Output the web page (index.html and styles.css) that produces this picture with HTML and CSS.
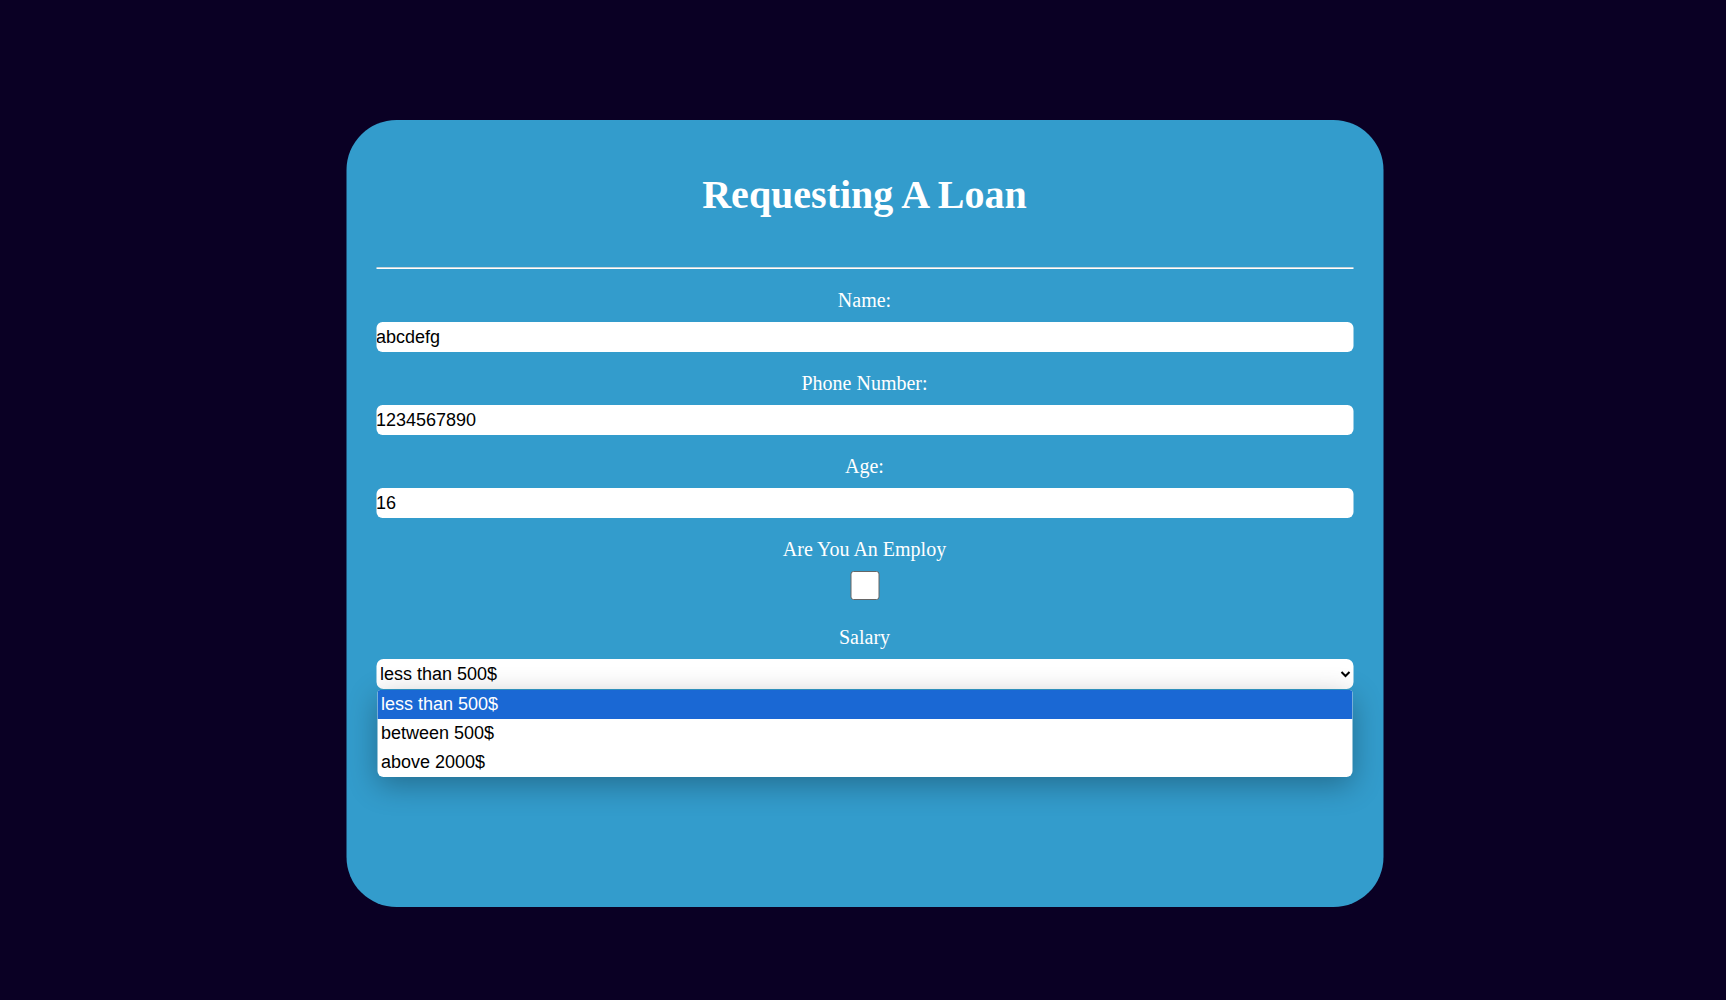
FILE: index.html
```html
<!DOCTYPE html>
<html lang="en">
<head>
<meta charset="utf-8">
<title>Requesting A Loan</title>
<link rel="stylesheet" href="styles.css">
</head>
<body>
<main class="card">
  <h1 class="title">Requesting A Loan</h1>
  <hr class="divider">
  <form class="form">
    <div class="field">
      <label class="field-label" for="name">Name:</label>
      <input class="text-input" id="name" type="text" value="abcdefg">
    </div>
    <div class="field">
      <label class="field-label" for="phone">Phone Number:</label>
      <input class="text-input" id="phone" type="text" value="1234567890">
    </div>
    <div class="field">
      <label class="field-label" for="age">Age:</label>
      <input class="text-input" id="age" type="text" value="16">
    </div>
    <div class="field field-check">
      <label class="field-label" for="employ">Are You An Employ</label>
      <input class="check" id="employ" type="checkbox">
    </div>
    <div class="field">
      <label class="field-label" for="salary">Salary</label>
      <div class="select-wrap">
        <select class="select" id="salary">
          <option>less than 500$</option>
          <option>between 500$</option>
          <option>above 2000$</option>
        </select>
        <ul class="popup">
          <li class="popup-item is-selected">less than 500$</li>
          <li class="popup-item">between 500$</li>
          <li class="popup-item">above 2000$</li>
        </ul>
      </div>
    </div>
  </form>
</main>
</body>
</html>
```
FILE: styles.css
```css
html, body {
  margin: 0;
  padding: 0;
}

body {
  background: #0a0024;
  min-height: 1000px;
  font-family: "Liberation Serif", "Times New Roman", serif;
  padding-top: 120px;
  box-sizing: border-box;
}

.card {
  box-sizing: border-box;
  width: 1037px;
  height: 787px;
  margin: 0 auto;
  transform: translateX(1.5px);
  padding: 52px 30px 0;
  background: #339ccc;
  border-radius: 50px;
}

.title {
  margin: 0;
  font-size: 40px;
  line-height: 46px;
  font-weight: bold;
  color: #ffffff;
  text-align: center;
}

.divider {
  margin: 49px 0 19px;
  border: 0;
  border-top: 1px solid #c9d3d8;
  border-bottom: 1px solid #ffffff;
  height: 0;
}

.form {
  margin: 0;
}

.field {
  display: flex;
  flex-direction: column;
  margin-bottom: 19px;
}

.field-label {
  display: block;
  font-size: 20px;
  line-height: 25px;
  color: #ffffff;
  text-align: center;
  margin-bottom: 9px;
}

.text-input {
  box-sizing: border-box;
  width: 100%;
  height: 30px;
  margin: 0;
  padding: 0;
  border: none;
  border-radius: 6px;
  background: #ffffff;
  color: #000000;
  font-family: "Liberation Sans", Arial, sans-serif;
  font-size: 18px;
  outline: none;
}

.field-check {
  margin-bottom: 25px;
}

.check {
  -webkit-appearance: none;
  appearance: none;
  box-sizing: border-box;
  display: block;
  width: 29px;
  height: 29px;
  margin: 0 auto;
  background: #ffffff;
  border: 1px solid #666666;
  border-radius: 3px;
}

.select-wrap {
  position: relative;
}

.select {
  box-sizing: border-box;
  width: 100%;
  height: 30px;
  margin: 0;
  border: none;
  border-radius: 7px;
  background: #ffffff;
  color: #000000;
  font-family: "Liberation Sans", Arial, sans-serif;
  font-size: 18px;
  outline: none;
}

.popup {
  position: absolute;
  top: 31px;
  left: 1px;
  right: 1px;
  margin: 0;
  padding: 0;
  list-style: none;
  background: #ffffff;
  border-radius: 3px 3px 6px 6px;
  box-shadow: 0 8px 30px rgba(0, 0, 0, 0.3);
  overflow: hidden;
}

.popup-item {
  height: 29px;
  line-height: 29px;
  padding-left: 4px;
  font-family: "Liberation Sans", Arial, sans-serif;
  font-size: 18px;
  color: #000000;
}

.popup-item.is-selected {
  background: #1a68d4;
  color: #ffffff;
}
```
